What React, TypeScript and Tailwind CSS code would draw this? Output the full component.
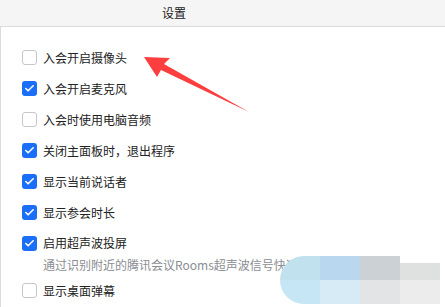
import { Check } from 'lucide-react';

const options = [
    { label: '入会开启摄像头', checked: false },
    { label: '入会开启麦克风', checked: true },
    { label: '入会时使用电脑音频', checked: false },
    { label: '关闭主面板时，退出程序', checked: true },
    { label: '显示当前说话者', checked: true },
    { label: '显示参会时长', checked: true },
];

function Box({ checked }: { checked: boolean }) {
    if (checked) {
        return (
            <span className="flex h-[15px] w-[15px] shrink-0 items-center justify-center rounded-[3px] bg-[#1b6ef8]">
                <Check className="h-[11px] w-[11px] text-white" strokeWidth={3.5} />
            </span>
        );
    }
    return <span className="h-[15px] w-[15px] shrink-0 rounded-[3px] border border-[#c4c7cc] bg-white" />;
}

function Row({ label, checked, h = 'h-[31px]' }: { label: string; checked: boolean; h?: string }) {
    return (
        <div className={`flex items-center gap-[6px] ${h}`}>
            <Box checked={checked} />
            <span className="text-[12px] leading-none text-[#222]">{label}</span>
        </div>
    );
}

export default function App() {
    return (
        <div
            className="relative h-[307px] w-[445px] overflow-hidden bg-white"
            style={{ fontFamily: '"Noto Sans CJK SC", "Noto Sans", sans-serif' }}
        >
            {/* Title bar */}
            <div className="flex h-[27px] border-b border-[#dcdcdc] bg-[#f5f5f5]">
                <div className="w-[348px] pt-[5px] text-center text-[12px] leading-[16px] text-[#222]">设置</div>
            </div>

            {/* Options */}
            <div className="h-[280px] border-l border-[#dcdcdc] pl-[21px] pt-[15px]">
                {options.map((o) => (
                    <Row key={o.label} label={o.label} checked={o.checked} />
                ))}
                <Row label="启用超声波投屏" checked h="h-[30px]" />
                <div className="h-[14px] pl-[21px] text-[12px] leading-[14px] whitespace-nowrap text-[#8a8d92]">
                    通过识别附近的腾讯会议Rooms超声波信号快速投屏
                </div>
                <div className="mt-[3px]">
                    <Row label="显示桌面弹幕" checked={false} />
                </div>
            </div>

            {/* Mosaic blur overlay */}
            <div className="absolute left-[280px] top-[256px] grid h-[48px] w-[160px] grid-cols-4 grid-rows-2 overflow-hidden rounded-l-[24px]">
                <div className="bg-[#c2e1ee]" />
                <div className="bg-[#b9d8ef]" />
                <div className="bg-[#ccd1d5]" />
                <div className="mt-[7px] bg-[#dfe0e0]" />
                <div className="bg-[#c6e6f6]" />
                <div className="bg-[#d6ebf6]" />
                <div className="bg-[#e3e4e6]" />
                <div className="bg-[#ececec]" />
            </div>

            {/* Red arrow */}
            <svg className="absolute left-0 top-0" width="445" height="307" viewBox="0 0 445 307">
                <polygon points="144,57 170,58 164,64 249,112 161,70 157,77" fill="#fd3e3e" />
            </svg>
        </div>
    );
}
